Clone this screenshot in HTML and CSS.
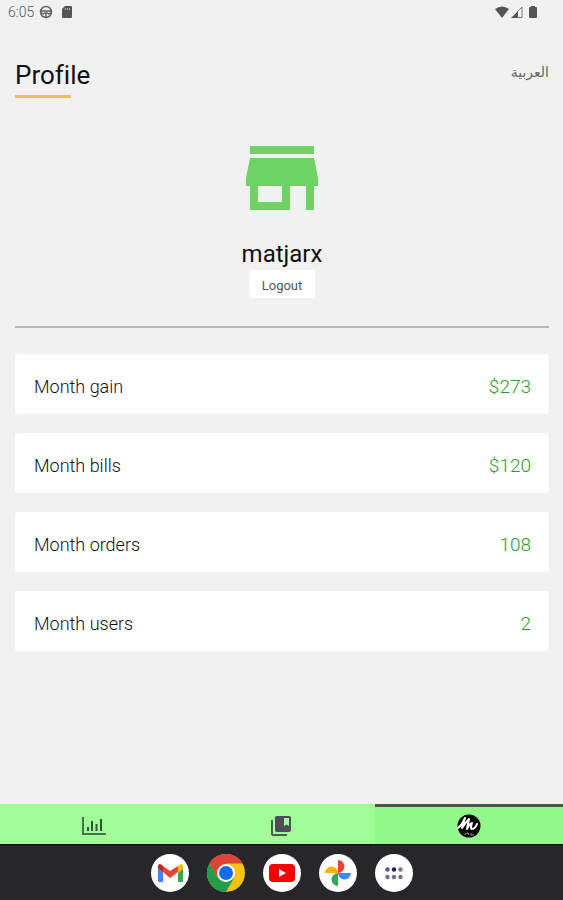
FILE: index.html
```html
<!DOCTYPE html>
<html lang="en">
<head>
    <meta charset="utf-8">
    <meta name="viewport" content="width=device-width, initial-scale=1.0">
    <title>Profile</title>
    <link rel="stylesheet" href="styles.css">
</head>
<body>
    <div class="status">
        <span class="time">6:05</span>
        <svg width="14" height="14" viewBox="0 0 14 14" fill="none" stroke="#626262" stroke-width="1.5">
            <circle cx="7" cy="7" r="5.5"/>
            <path d="M2 6h10M5 8h4M7 8v4M2 8l3 1M12 8l-3 1"/>
        </svg>
        <svg class="sd" width="10" height="12" viewBox="0 0 10 12">
            <path fill="#555" d="M3 0h6q1 0 1 1v10q0 1-1 1H1q-1 0-1-1V3z"/>
            <path stroke="#aaa" d="M3.5 2v2M5.5 2v2M7.5 2v2"/>
        </svg>
        <div class="signals">
            <svg width="14" height="12" viewBox="0 0 14 12"><path fill="#555" d="M0 3Q7-2 14 3L7 12z"/></svg>
            <svg width="12" height="12" viewBox="0 0 12 12">
                <path fill="#555" d="M0 12L7 5v7z"/>
                <path fill="none" stroke="#777" d="M6 6l5-5v10.500H6"/>
            </svg>
            <svg class="battery" width="8" height="12" viewBox="0 0 8 12"><path fill="#555" d="M2 0h4v1h1q1 0 1 1v9q0 1-1 1H1q-1 0-1-1V2q0-1 1-1h1z"/></svg>
        </div>
    </div>

    <main>
        <header>
            <h1>Profile</h1>
            <a class="lang" href="#" lang="ar">العربية</a>
        </header>

        <section class="store">
            <svg width="96" height="96" viewBox="0 0 24 24">
                <path fill="#6bd465" d="M20 4H4v2h16V4zm1 10v-2l-1-5H4l-1 5v2h1v6h10v-6h4v6h2v-6h1zm-9 4H6v-4h6v4z"/>
            </svg>
            <h2>matjarx</h2>
            <button class="logout">Logout</button>
        </section>

        <hr>

        <dl class="stats">
            <div class="card"><dt>Month gain</dt><dd>$273</dd></div>
            <div class="card"><dt>Month bills</dt><dd>$120</dd></div>
            <div class="card"><dt>Month orders</dt><dd>108</dd></div>
            <div class="card"><dt>Month users</dt><dd>2</dd></div>
        </dl>
    </main>

    <nav class="tabs">
        <a href="#" aria-label="Statistics">
            <svg width="24" height="20" viewBox="0 0 24 20" fill="none" stroke="#47734a" stroke-width="2">
                <path d="M1 1v17h23"/>
                <path stroke="#34543a" d="M6 11v4M10 5v10M14.500 8v7M19 3v12"/>
            </svg>
        </a>
        <a href="#" aria-label="Orders">
            <svg width="24" height="24" viewBox="0 0 24 24">
                <path fill="#446447" d="M4 6H2v14c0 1.100.9 2 2 2h14v-2H4V6z"/>
                <path fill="#504a59" d="M20 2H8c-1.100 0-2 .9-2 2v12c0 1.100.9 2 2 2h12c1.100 0 2-.9 2-2V4c0-1.100-.9-2-2-2zm0 10l-2.500-1.500L15 12V4h5v8z"/>
            </svg>
        </a>
        <a href="#" class="active" aria-label="Profile">
            <svg width="24" height="24" viewBox="0 0 24 24">
                <circle cx="12" cy="12" r="11.500" fill="#080808"/>
                <path fill="none" stroke="#fff" stroke-width="2" stroke-linecap="round" stroke-linejoin="round" d="M1 14Q5 11 8 4L5 14Q9 8 12 5L10 15Q13 9 15 9Q13 15 15 15Q18 15 20 10"/>
                <path fill="none" stroke="#a59490" d="M8 21q0-2 3-2l1 2M14 19v2h3"/>
            </svg>
        </a>
    </nav>

    <footer class="dock">
        <a href="#" aria-label="Gmail">
            <svg viewBox="0 0 38 38">
                <circle cx="19" cy="19" r="19" fill="#fff"/>
                <path fill="#4285f4" d="M7 13l5 4v11H8q-1 0-1-1z"/>
                <path fill="#34a853" d="M27 17l5-4v14q0 1-1 1h-4z"/>
                <path fill="#ea4335" d="M12 12l7 5 8-5v6l-8 6-7-6z"/>
                <path fill="#c5221f" d="M7 14v-2q1-4 5 0v6z"/>
                <path fill="#fbbc04" d="M27 12q4-4 5 0v3l-5 4z"/>
            </svg>
        </a>
        <a href="#" aria-label="Chrome">
            <svg viewBox="0 0 38 38">
                <circle cx="19" cy="19" r="19" fill="#fbc116"/>
                <path fill="#dc4437" d="M2.500 9.500A19 19 0 0 1 35.500 9.500H19L10.800 23.700z"/>
                <path fill="#259b4b" d="M2.500 9.500A19 19 0 0 0 19 38L27.200 23.700H10.800z"/>
                <circle cx="19" cy="19" r="9" fill="#fff"/>
                <circle cx="19" cy="19" r="7" fill="#176de5"/>
            </svg>
        </a>
        <a href="#" aria-label="YouTube">
            <svg viewBox="0 0 38 38">
                <circle cx="19" cy="19" r="19" fill="#fff"/>
                <rect x="6" y="10" width="26" height="18" rx="4" fill="#f80000"/>
                <path fill="#fff" d="M16 15l7 4-7 4z"/>
            </svg>
        </a>
        <a href="#" aria-label="Photos">
            <svg viewBox="0 0 38 38">
                <circle cx="19" cy="19" r="19" fill="#fff"/>
                <path fill="#ea4335" d="M19 6a6.500 6.500 0 0 1 0 13z"/>
                <path fill="#4285f4" d="M32 19a6.500 6.500 0 0 1-13 0z"/>
                <path fill="#34a853" d="M19 32a6.500 6.500 0 0 1 0-13z"/>
                <path fill="#f4b400" d="M6 19a6.500 6.500 0 0 1 13 0z"/>
            </svg>
        </a>
        <a href="#" aria-label="All apps">
            <svg viewBox="0 0 38 38">
                <circle cx="19" cy="19" r="19" fill="#fff"/>
                <g fill="#6f7185">
                    <circle cx="12.500" cy="15.500" r="2.200" fill="#5d5295"/>
                    <circle cx="19" cy="15.500" r="2.200" fill="#231b86"/>
                    <circle cx="25.500" cy="15.500" r="2.200" fill="#95697f"/>
                    <circle cx="12.500" cy="23" r="2.200"/>
                    <circle cx="19" cy="23" r="2.200"/>
                    <circle cx="25.500" cy="23" r="2.200"/>
                </g>
            </svg>
        </a>
    </footer>
</body>
</html>
```
FILE: styles.css
```css
* {
    box-sizing: border-box;
}

body {
    display: flex;
    flex-direction: column;
    min-height: 100vh;
    margin: 0;
    background-color: #f1f1f1;
    color: #111;
    font-family: Roboto, "DejaVu Sans", sans-serif;
    font-variant-ligatures: no-common-ligatures;
}

svg {
    display: block;
}

/* android status bar */
.status {
    display: flex;
    align-items: center;
    height: 24px;
    padding: 0 26px 0 8px;
}

.time {
    margin-right: 5px;
    font-size: 14px;
    font-weight: 300;
    color: #555;
}

.sd {
    margin-left: 9px;
}

.signals {
    display: flex;
    gap: 2px;
    margin-left: auto;
}

.battery {
    margin-left: 4px;
}

main {
    flex: 1;
    padding: 36px 14px 20px 15px;
}

header {
    display: flex;
    justify-content: space-between;
    align-items: flex-start;
}

h1 {
    margin: 0;
    font-size: 26px;
    font-weight: 400;
    line-height: 30px;
}

h1::after {
    content: "";
    display: block;
    width: 56px;
    height: 3px;
    margin-top: 5px;
    background-color: #f0bc5e;
}

.lang {
    font-size: 14px;
    line-height: 24px;
    color: #666;
    text-decoration: none;
}

.store {
    display: flex;
    flex-direction: column;
    align-items: center;
    margin-top: 32px;
}

h2 {
    margin: 14px 0 2px;
    font-size: 24px;
    font-weight: 400;
    line-height: 28px;
}

.logout {
    height: 28px;
    padding: 2px 13px 0;
    border: 0;
    background-color: #fff;
    color: #555;
    font-family: inherit;
    font-size: 13px;
}

hr {
    height: 2px;
    margin: 28px 0 26px;
    border: 0;
    background-color: #b9b9b9;
}

.stats {
    display: grid;
    gap: 19px;
    margin: 0;
}

.card {
    display: flex;
    justify-content: space-between;
    align-items: center;
    height: 60px;
    padding: 5px 18px 0 19px;
    border-radius: 3px;
    background-color: #fff;
    font-size: 18px;
    font-weight: 300;
}

dd {
    margin: 0;
    color: #2e9c2e;
    font-size: 19px;
}

.tabs {
    display: grid;
    grid-template-columns: repeat(3, 1fr);
    height: 40px;
    background-color: #a0ff98;
}

.tabs a {
    display: flex;
    align-items: center;
    justify-content: center;
    padding-top: 3px;
}

.tabs .active {
    padding-top: 0;
    border-top: 3px solid #485548;
    background-color: #93f88b;
}

.dock {
    display: flex;
    justify-content: center;
    align-items: center;
    gap: 18px;
    height: 56px;
    border-top: 1px solid #0c120c;
    background-color: #27262b;
}

.dock svg {
    width: 38px;
    height: 38px;
}
```
